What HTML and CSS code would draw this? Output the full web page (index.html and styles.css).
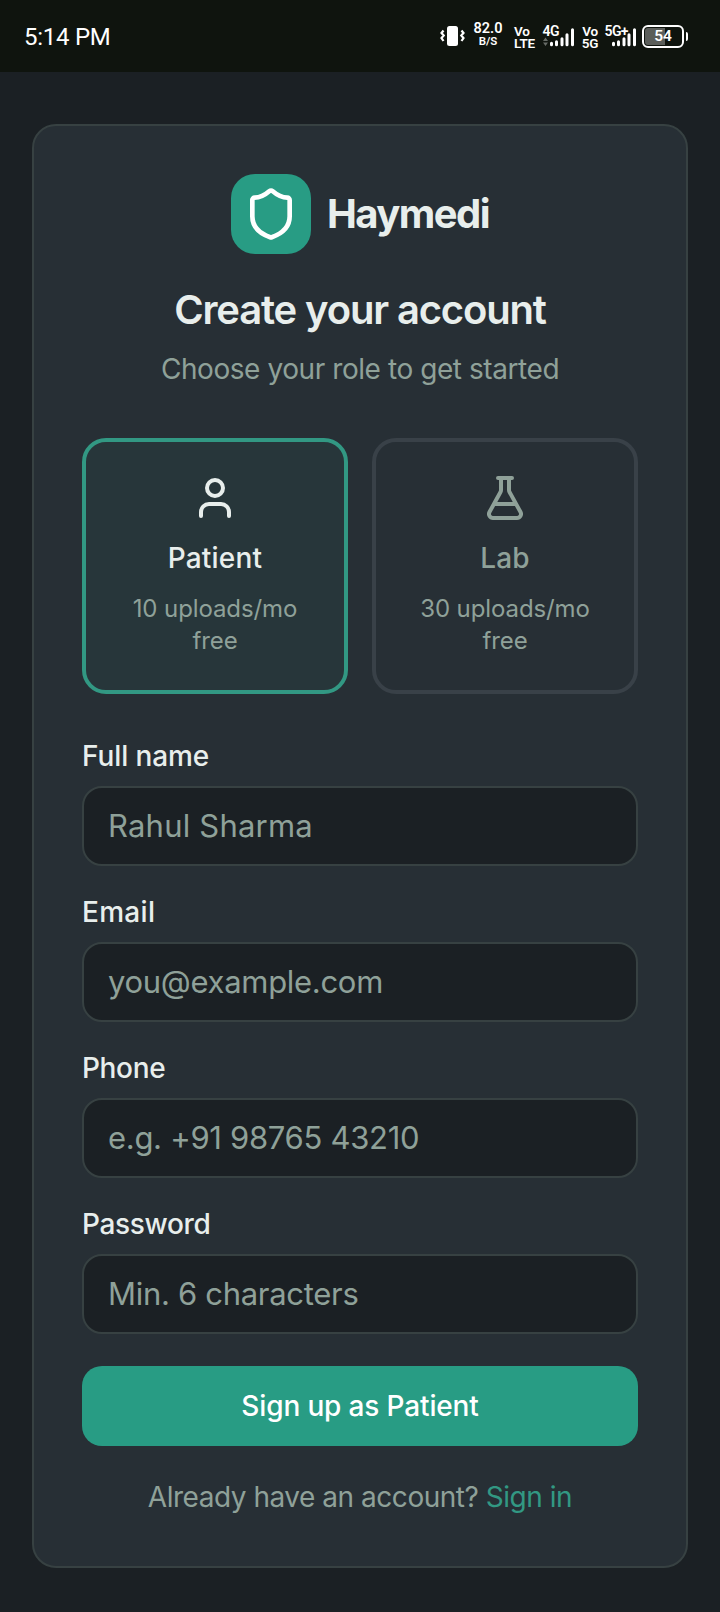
FILE: index.html
```html
<!DOCTYPE html>
<html lang="en">
<head>
<meta charset="utf-8">
<title>Haymedi – Create your account</title>
<link rel="stylesheet" href="styles.css">
</head>
<body>
<header class="status">
  <span class="clock">5:14 PM</span>
  <div class="indicators">
    <svg class="vibrate" width="25" height="22" viewBox="0 0 25 22"><rect x="7" y="1" width="11" height="20" rx="2.500" fill="#fff"/><path d="M3.500 5.500l-2 2.500 2.200 2.500-2.200 2.500 2 3M21.500 5.500l2 2.500-2.200 2.500 2.200 2.500-2 3" fill="none" stroke="#fff" stroke-width="2.200"/></svg>
    <span class="pair speed"><b>82.0</b><small>B/S</small></span>
    <span class="pair volte"><b>Vo</b><b>LTE</b></span>
    <svg class="signal lte" width="32" height="24" viewBox="0 0 32 24"><text class="net" x="-.5" y="12" textLength="17">4G</text><path d="M8.500 20.800v-1.500M13.500 20.800v-3M19 20.800v-6M24 20.800v-10M29.500 20.800v-15" stroke="#fff" stroke-width="3" stroke-linecap="round"/><path d="M0 17l2.500-3.500 2.500 3.500zM0 18.500l2.500 3.500 2.500-3.500z" fill="#666b66"/></svg>
    <span class="pair vo5"><b>Vo</b><b>5G</b></span>
    <svg class="signal nr" width="32" height="24" viewBox="0 0 32 24"><text class="net" x="-.5" y="12" textLength="24">5G+</text><path d="M8.500 20.800v-1.500M13.500 20.800v-3M19 20.800v-6M24 20.800v-10M29.500 20.800v-15" stroke="#fff" stroke-width="3" stroke-linecap="round"/></svg>
    <span class="battery"><span class="level">54</span></span>
  </div>
</header>
<main class="page">
  <form class="card">
    <div class="brand">
      <span class="logo"><svg width="56" height="56" viewBox="0 0 24 24"><path d="M20 13c0 5-3.500 7.500-7.660 8.950a1 1 0 0 1-.67-.01C7.500 20.500 4 18 4 13V6a1 1 0 0 1 1-1c2 0 4.500-1.200 6.240-2.720a1.170 1.170 0 0 1 1.520 0C14.510 3.810 17 5 19 5a1 1 0 0 1 1 1z"/></svg></span>
      <span class="name">Haymedi</span>
    </div>
    <h1 class="title">Create your account</h1>
    <p class="subtitle">Choose your role to get started</p>
    <div class="roles">
      <button type="button" class="role selected">
        <svg class="icon" viewBox="0 0 24 24"><path d="M19 21v-2a4 4 0 0 0-4-4H9a4 4 0 0 0-4 4v2"/><circle cx="12" cy="7" r="4"/></svg>
        <span class="role-name">Patient</span>
        <span class="quota">10 uploads/mo<br>free</span>
      </button>
      <button type="button" class="role">
        <svg class="icon" viewBox="0 0 24 24"><path d="M14 2v6a2 2 0 0 0 .245.960l5.510 10.080A2 2 0 0 1 18 22H6a2 2 0 0 1-1.755-2.960l5.510-10.080A2 2 0 0 0 10 8V2M6.453 15h11.094M8.500 2h7"/></svg>
        <span class="role-name">Lab</span>
        <span class="quota">30 uploads/mo<br>free</span>
      </button>
    </div>
    <div class="fields">
      <div class="field"><label for="name">Full name</label><input class="wide" id="name" type="text" placeholder="Rahul Sharma"></div>
      <div class="field"><label class="wide" for="email">Email</label><input id="email" type="email" placeholder="you@example.com"></div>
      <div class="field"><label class="tight" for="phone">Phone</label><input id="phone" type="tel" placeholder="e.g. +91 98765 43210"></div>
      <div class="field"><label class="tight" for="password">Password</label><input id="password" type="password" placeholder="Min. 6 characters"></div>
      <button type="button" class="submit">Sign up as Patient</button>
    </div>
    <p class="signin">Already have an account? <a>Sign in</a></p>
  </form>
</main>
</body>
</html>
```
FILE: styles.css
```css
* { box-sizing: border-box; }
body { margin: 0; background: #1b2024; color: #e8eeec; font-family: Inter, "Liberation Sans", sans-serif; }

.status { height: 72px; background: #0f140e; color: #fff; display: flex; justify-content: space-between; padding: 0 36px 0 24px; font-family: Roboto, sans-serif; }
.clock { font-size: 24px; line-height: 74px; letter-spacing: -0.250px; }
.indicators { display: flex; align-items: center; height: 72px; }
.pair { display: flex; flex-direction: column; align-items: center; font-size: 13.5px; line-height: 12px; }
.pair b, .pair small { font-weight: 600; }
.speed { width: 28px; font-size: 14.5px; line-height: 12px; margin: 0 12px 3px 9px; }
.speed small { font-size: 11.5px; line-height: 12px; }
.volte { width: 20px; margin-right: 9px; padding-top: 1px; align-items: flex-start; letter-spacing: -0.3px; }
.vo5 { width: 16px; margin: 0 7px; padding-top: 1px; letter-spacing: -0.3px; }
.net { font: 600 14px Roboto, sans-serif; fill: #fff; }
.signal { overflow: visible; }
.battery { position: relative; width: 42px; height: 23px; border: 2px solid #fff; border-radius: 6px; margin-left: 5px; background: linear-gradient(90deg, #5b5e5a 54%, transparent 54%); background-clip: content-box; padding: 1px; }
.battery::after { content: ""; position: absolute; right: -6px; top: 5px; width: 2.500px; height: 9px; border-radius: 0 2px 2px 0; background: #fff; }
.level { display: block; text-align: center; font-size: 15.5px; line-height: 17px; font-weight: 600; }

.page { padding: 52px 32px 44px; }
.card { margin: 0; border: 2px solid #374142; border-radius: 24px; background: #272f35; padding: 48px; }
.brand { display: flex; align-items: center; justify-content: center; gap: 16px; height: 80px; }
.logo { width: 80px; height: 80px; border-radius: 24px; background: #289c84; display: grid; place-items: center; }
.logo svg, .icon { fill: none; stroke: #fff; stroke-width: 2; stroke-linecap: round; stroke-linejoin: round; }
.name { font-size: 40px; line-height: 48px; margin-top: -1px; font-weight: 700; letter-spacing: -1.550px; }
.title { margin: 32px 0 0; font-size: 40px; line-height: 48px; font-weight: 600; letter-spacing: -1.150px; text-align: center; }
.subtitle { margin: 16px 0 0; font-size: 28px; line-height: 39px; height: 40px; letter-spacing: -0.430px; text-align: center; color: #8fa199; }

.roles { display: grid; grid-template-columns: 1fr 1fr; gap: 24px; margin-top: 48px; height: 256px; }
.role { display: flex; flex-direction: column; align-items: center; border: 4px solid #394148; border-radius: 24px; background: none; padding: 32px; color: #8fa199; font-family: inherit; }
.role.selected { border-color: #329883; background: #27363a; color: #e8eeec; }
.icon { width: 48px; height: 48px; stroke: currentColor; }
.role-name { margin-top: 16px; font-size: 28px; line-height: 40px; font-weight: 500; letter-spacing: 0.200px; }
.quota { margin-top: 15px; font-size: 24px; line-height: 32px; letter-spacing: -0.100px; color: #8fa199; }

.fields { display: flex; flex-direction: column; gap: 32px; margin-top: 48px; }
.field { display: flex; flex-direction: column; gap: 16px; }
label { font-size: 28px; line-height: 28px; height: 28px; font-weight: 500; letter-spacing: -0.100px; }
label.wide { letter-spacing: 0.300px; }
label.tight { letter-spacing: -0.350px; }
input { width: 100%; height: 80px; border: 2px solid #374142; border-radius: 20px; background: #1b2024; padding: 0 24px 2px; font: 31px Inter, "Liberation Sans", sans-serif; letter-spacing: -0.300px; }
input.wide { letter-spacing: 0.200px; }
input::placeholder { color: #8fa199; opacity: 1; }
.submit { width: 100%; height: 80px; border: 0; border-radius: 20px; padding: 0 0 1px; background: #289c84; color: #fff; font: 500 28px Inter, "Liberation Sans", sans-serif; letter-spacing: -0.150px; }
.signin { margin: 32px 0 0; font-size: 28px; line-height: 39px; height: 40px; letter-spacing: -0.470px; text-align: center; color: #8fa199; }
.signin a { color: #329883; }
```
